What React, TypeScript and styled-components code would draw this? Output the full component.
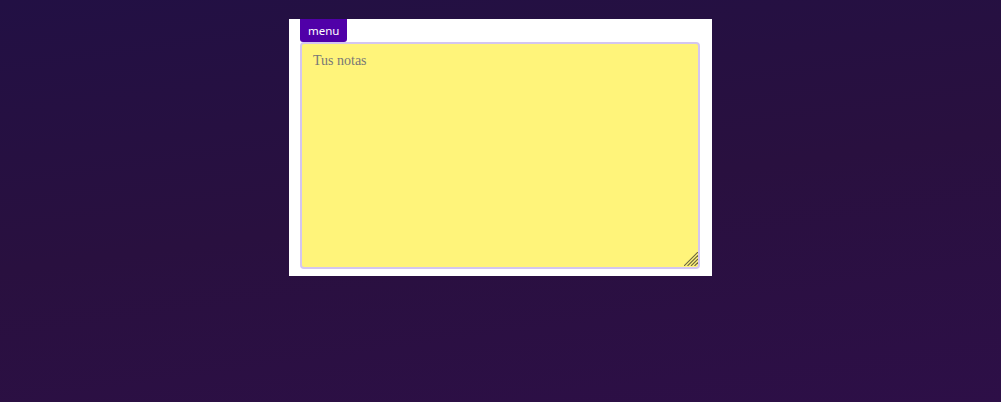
import React from 'react'
import styled, { createGlobalStyle } from 'styled-components'

const GlobalStyle = createGlobalStyle`
	html, body {
		margin: 0;
		height: 100%;
	}
	body {
		background: linear-gradient(172deg, #221044 0%, #29103f 50%, #2d0f47 100%);
		font-family: 'Noto Sans', sans-serif;
	}
`

const Page = styled.div`
	display: flex;
	justify-content: center;
	padding-top: 19px;
`

const Panel = styled.div`
	display: flex;
	flex-direction: column;
	align-items: flex-start;
	background: #ffffff;
	padding: 0 12px 7px 11px;
`

const MenuButton = styled.button`
	background: #5000a8;
	color: #ffffff;
	border: none;
	border-radius: 0 0 3px 3px;
	font-family: 'Noto Sans', sans-serif;
	font-size: 11.5px;
	font-weight: 400;
	height: 23px;
	padding: 0 8px;
	cursor: pointer;
`

const NotesBox = styled.div`
	position: relative;
	display: flex;
`

const Notes = styled.textarea`
	box-sizing: border-box;
	width: 400px;
	height: 227px;
	background: #fff47a;
	border: 2px solid #d4c6f0;
	border-radius: 4px;
	padding: 9px 11px;
	font-family: 'Liberation Serif', serif;
	font-size: 14px;
	color: #333;
	outline: none;
	&::placeholder {
		color: #777777;
	}
	&::-webkit-resizer {
		background: transparent;
	}
`

const Grip = styled.svg`
	position: absolute;
	right: 2px;
	bottom: 3px;
	width: 14px;
	height: 14px;
	pointer-events: none;
`

const App = () => {
	return (
		<>
			<GlobalStyle />
			<Page>
				<Panel>
					<MenuButton>{'menu'}</MenuButton>
					<NotesBox>
						<Notes placeholder='Tus notas' />
						<Grip viewBox='0 0 14 14'>
							<g stroke='#6b6440' strokeWidth='1.1'>
								<line x1='14' y1='0' x2='0' y2='14' />
								<line x1='14' y1='3.5' x2='3.5' y2='14' />
								<line x1='14' y1='7' x2='7' y2='14' />
								<line x1='14' y1='10.5' x2='10.5' y2='14' />
							</g>
						</Grip>
					</NotesBox>
				</Panel>
			</Page>
		</>
	)
}

export default App
